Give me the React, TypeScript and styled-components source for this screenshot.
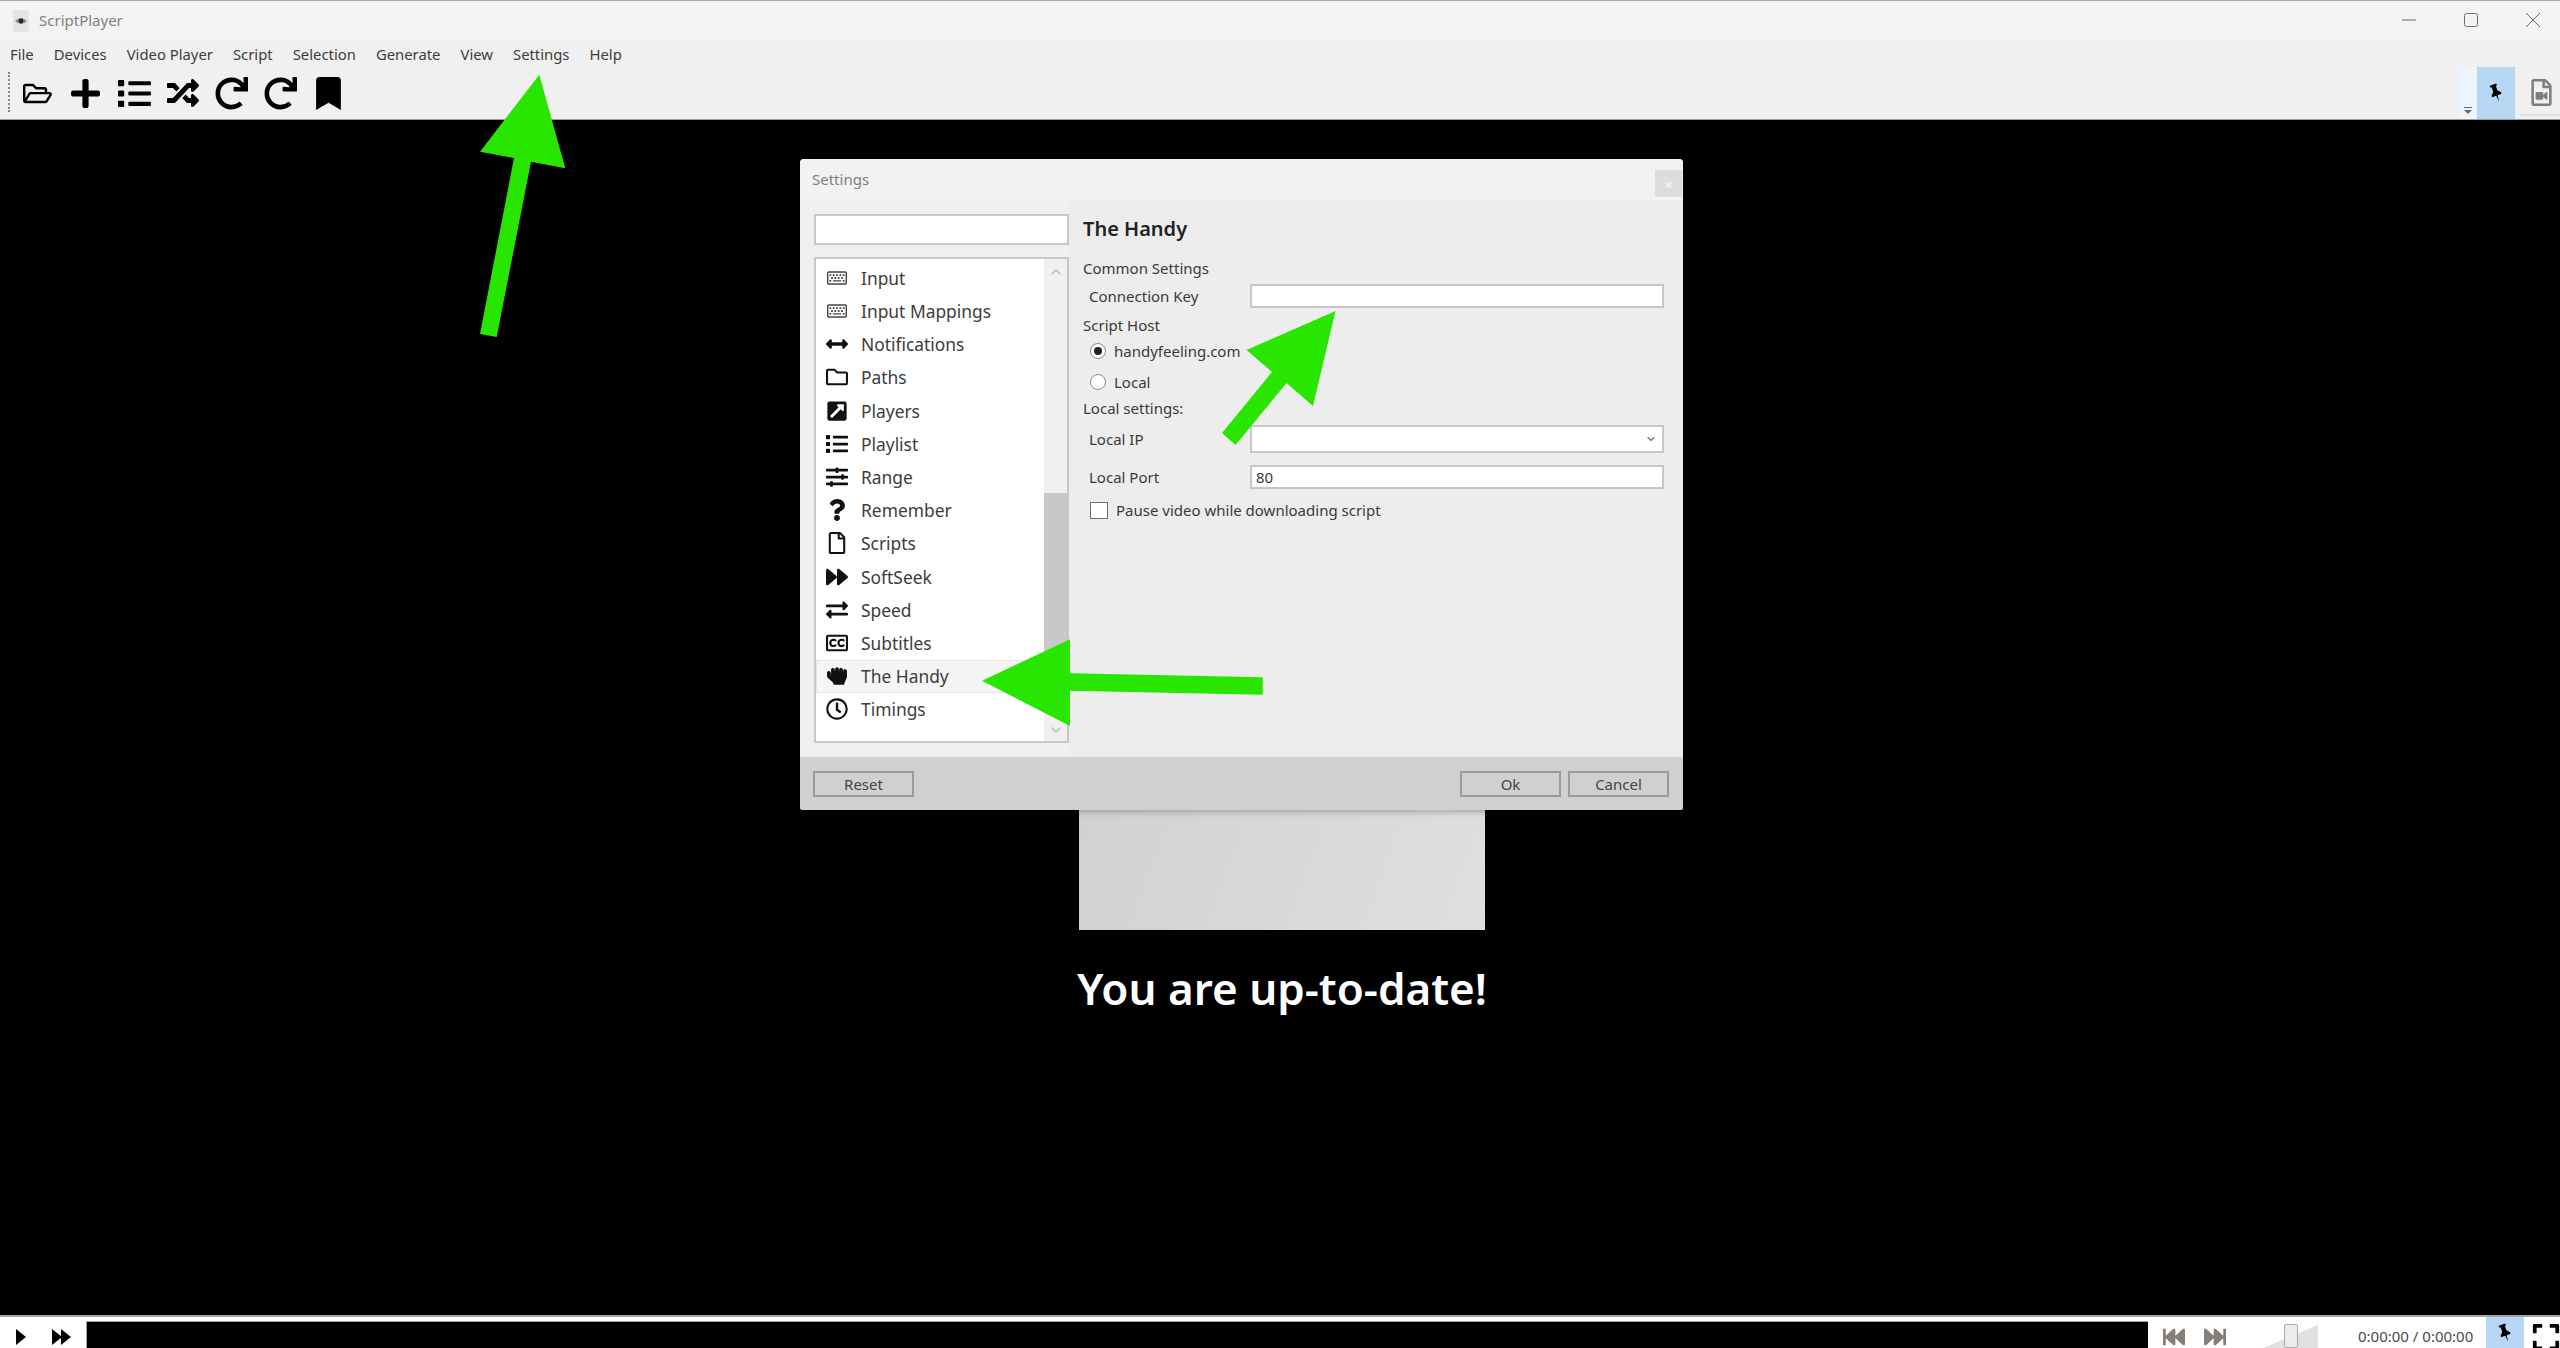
import React from 'react';
import styled, {createGlobalStyle} from 'styled-components';
import {ChevronDown, ChevronUp} from 'lucide-react';
import {
  FaArrowsAltH, FaBookmark, FaExchangeAlt, FaExpand, FaExternalLinkSquareAlt, FaFastBackward, FaFastForward,
  FaForward, FaHandRock, FaList, FaPlus, FaQuestion, FaRandom, FaRedo, FaRegClock, FaRegClosedCaptioning,
  FaRegFile, FaRegFileVideo, FaRegFolder, FaRegFolderOpen, FaRegKeyboard, FaSlidersH,
} from 'react-icons/fa';

const UI_FONT = `'Noto Sans', 'Open Sans', sans-serif`;

const GlobalStyle = createGlobalStyle`
  html, body {
    margin: 0;
    padding: 0;
    background: #000;
  }
  * {
    box-sizing: border-box;
  }
`;

const Page = styled.div`
  position: relative;
  width: 2560px;
  height: 1348px;
  display: flex;
  flex-direction: column;
  overflow: hidden;
  font-family: ${UI_FONT};
  color: #333;
`;

const TitleBar = styled.div`
  height: 41px;
  display: flex;
  align-items: center;
  padding-left: 13px;
  background: #f3f3f3;
  border-top: 1px solid #a8a8a8;
`;

const AppName = styled.span`
  margin-left: 10px;
  margin-bottom: 2px;
  font-size: 15px;
  color: #7f7f7f;
`;

const WindowControls = styled.div`
  margin-left: auto;
  display: flex;
  gap: 48px;
  padding: 0 20px 2px 0;
  color: #6c6c6c;
`;

const MenuBar = styled.div`
  height: 26px;
  display: flex;
  align-items: center;
  background: #f0f0f0;
`;

const MenuItem = styled.span`
  padding: 0 10px;
  font-size: 14.85px;
  color: #3d3d3d;
`;

const ToolBar = styled.div`
  height: 53px;
  display: flex;
  background: #f0f0f0;
  border-bottom: 1px solid #9c9c9c;
`;

const ToolHandle = styled.div`
  width: 2px;
  height: 40px;
  margin: 5px 3px 0 8px;
  border-left: 2px dotted #8a8a8a;
`;

const ToolButton = styled.div`
  width: 48.6px;
  height: 52px;
  display: flex;
  align-items: center;
  justify-content: center;
  color: #000;
`;

const ToolEnd = styled.div`
  margin-left: auto;
  display: flex;
`;

const OverflowGrip = styled.div`
  width: 18px;
  height: 52px;
  display: flex;
  align-items: flex-end;
  justify-content: center;
  padding-bottom: 5px;
  background: #ecf4fc;
`;

const PinToggle = styled.div<{$wide?: boolean}>`
  width: 38px;
  height: ${p => (p.$wide ? '31px' : '52px')};
  display: flex;
  align-items: center;
  justify-content: center;
  background: #b7d6f4;
  color: #000;
  svg {
    transform: rotate(-20deg);
  }
`;

const FileButton = styled.div`
  width: 45px;
  height: 52px;
  padding: 12px 0 0 13px;
  color: #7d7d7d;
`;

const FileButtonRule = styled.div`
  height: 2px;
  margin: 3px 0 0 -8px;
  background: #e2e2e2;
`;

const VideoArea = styled.main`
  flex: 1;
  display: flex;
  flex-direction: column;
  align-items: center;
  justify-content: center;
  padding-left: 4px;
  background: #000;
`;

const SplashImage = styled.div`
  width: 406px;
  height: 513px;
  background: linear-gradient(110deg, #cdcdcd, #dfdfdf);
`;

const SplashText = styled.div`
  margin-top: 28px;
  font-size: 44px;
  line-height: 60px;
  font-weight: 600;
  color: #fff;
`;

const BottomBar = styled.div`
  height: 33px;
  display: flex;
  background: #fff;
  border-top: 2px solid #a4a4a4;
`;

const PlayControls = styled.div`
  width: 86px;
  display: flex;
  align-items: center;
  padding: 8px 0 0 16px;
  gap: 26px;
  color: #000;
`;

const SeekBar = styled.div`
  flex: 1;
  margin-top: 4px;
  background: #000;
  border-top: 1px solid #a4a4a4;
  border-left: 1px solid #a4a4a4;
`;

const TransportGroup = styled.div`
  width: 412px;
  display: flex;
  align-items: center;
`;

const SkipGroup = styled.div`
  display: flex;
  align-items: center;
  gap: 19px;
  padding: 8px 0 0 15px;
  color: #857d78;
`;

const VolumeWrap = styled.div`
  position: relative;
  width: 55px;
  height: 31px;
  margin-left: 37px;
  padding-top: 8px;
`;

const VolumeThumb = styled.div`
  position: absolute;
  left: 21px;
  top: 7px;
  width: 14px;
  height: 24px;
  background: #ececec;
  border: 1px solid #ababab;
  border-radius: 2px;
`;

const TimeText = styled.span`
  width: 115px;
  margin-left: 40px;
  padding-top: 6px;
  font-size: 15px;
  white-space: nowrap;
  color: #4a4a4a;
`;

const BottomPin = styled.div`
  margin-left: 13px;
`;

const FullscreenSlot = styled.div`
  width: 30px;
  height: 31px;
  margin-left: 7px;
  padding-top: 5px;
  overflow: hidden;
  color: #000;
`;

const Dialog = styled.div`
  position: absolute;
  left: 800px;
  top: 159px;
  width: 883px;
  height: 651px;
  display: flex;
  flex-direction: column;
  background: #ededed;
  border-radius: 4px 4px 3px 3px;
  overflow: hidden;
  box-shadow: 0 2px 6px rgba(0, 0, 0, 0.25);
`;

const DialogTitleBar = styled.div`
  height: 41px;
  display: flex;
  justify-content: space-between;
  padding: 11px 1px 3px 12px;
  background: #f2f2f2;
`;

const DialogTitle = styled.span`
  font-size: 15px;
  line-height: 18px;
  color: #808080;
`;

const DialogClose = styled.div`
  width: 27px;
  height: 27px;
  display: flex;
  align-items: center;
  justify-content: center;
  background: #dddddd;
  color: #f4f4f4;
  font-size: 15px;
  font-weight: 700;
`;

const DialogBody = styled.div`
  flex: 1;
  display: flex;
  min-height: 0;
`;

const SidePane = styled.div`
  width: 269px;
  padding: 14px 0 0 14px;
  background: #efefef;
`;

const SearchBox = styled.input`
  display: block;
  width: 255px;
  height: 31px;
  background: #fff;
  border: 2px solid #c6c6cc;
  outline: none;
`;

const CategoryBox = styled.div`
  width: 255px;
  height: 486px;
  margin-top: 12px;
  display: flex;
  background: #fff;
  border: 2px solid #c6c6cc;
`;

const CategoryRows = styled.div`
  flex: 1;
  padding-top: 2.3px;
`;

const CategoryRow = styled.div<{$selected?: boolean}>`
  height: 33.2px;
  display: flex;
  align-items: center;
  padding-left: 10px;
  font-size: 17.4px;
  color: #3c3c3c;
  background: ${p => (p.$selected ? '#f5f5f5' : 'transparent')};
  box-shadow: ${p => (p.$selected ? 'inset 0 0 0 1px #e6e6e6' : 'none')};
`;

const CategoryIcon = styled.span`
  width: 22px;
  margin-right: 13px;
  display: flex;
  justify-content: center;
  color: #111;
`;

const ScrollTrack = styled.div`
  width: 23px;
  display: flex;
  flex-direction: column;
  align-items: center;
  background: #f0f0f0;
  color: #b9b9b9;
`;

const ScrollUp = styled.div`
  height: 26px;
  display: flex;
  align-items: center;
`;

const ScrollThumb = styled.div`
  width: 23px;
  height: 207px;
  margin-top: 208px;
  background: #c8c8c8;
`;

const ScrollDown = styled.div`
  height: 22px;
  margin-top: auto;
  display: flex;
  align-items: center;
`;

const SettingsPane = styled.div`
  flex: 1;
  padding: 14px 19px 0 14px;
`;

const PageHeading = styled.div`
  height: 30px;
  font-size: 20px;
  line-height: 30px;
  font-weight: 600;
  color: #222;
`;

const GroupLabel = styled.div<{$top: number}>`
  height: 22px;
  margin-top: ${p => p.$top}px;
  font-size: 15px;
  line-height: 21px;
  color: #3a3a3a;
`;

const FieldRow = styled.div<{$top: number}>`
  display: flex;
  align-items: center;
  margin-top: ${p => p.$top}px;
`;

const FieldLabel = styled.label`
  width: 167px;
  padding-left: 6px;
  font-size: 15px;
  color: #3a3a3a;
`;

const TextField = styled.input`
  width: 414px;
  height: 24px;
  padding: 0 4px;
  background: #fff;
  border: 2px solid #c6c6cc;
  outline: none;
  font-family: ${UI_FONT};
  font-size: 15px;
  color: #3a3a3a;
`;

const ComboField = styled.div`
  width: 414px;
  height: 28px;
  display: flex;
  align-items: center;
  justify-content: flex-end;
  padding-right: 5px;
  background: #fff;
  border: 2px solid #c6c6cc;
  color: #777;
`;

const ChoiceRow = styled.div<{$top: number}>`
  height: 24px;
  margin-top: ${p => p.$top}px;
  padding-left: 7px;
  display: flex;
  align-items: center;
  gap: 8px;
  font-size: 15px;
  color: #3a3a3a;
`;

const RadioDot = styled.span<{$checked?: boolean}>`
  width: 16px;
  height: 16px;
  display: flex;
  align-items: center;
  justify-content: center;
  background: #fff;
  border: 1.5px solid #8c8c8c;
  border-radius: 50%;
  &::after {
    content: '';
    width: 8px;
    height: 8px;
    border-radius: 50%;
    background: ${p => (p.$checked ? '#222' : 'transparent')};
  }
`;

const CheckBox = styled.span`
  width: 18px;
  height: 17px;
  background: #fff;
  border: 1.5px solid #6e6e6e;
`;

const DialogFooter = styled.div`
  height: 53px;
  display: flex;
  align-items: center;
  gap: 7px;
  padding: 0 14px 0 13px;
  background: #d0d0d0;
`;

const FooterButton = styled.div<{$push?: boolean}>`
  width: 101px;
  height: 26px;
  margin-left: ${p => (p.$push ? 'auto' : '0')};
  display: flex;
  align-items: center;
  justify-content: center;
  border: 2px solid #9b9b9b;
  font-size: 15px;
  color: #444;
`;

const ArrowLayer = styled.svg`
  position: absolute;
  left: 0;
  top: 0;
  pointer-events: none;
`;

const menuItems = ['File', 'Devices', 'Video Player', 'Script', 'Selection', 'Generate', 'View', 'Settings', 'Help'];

const categories = [
  {label: 'Input', icon: <FaRegKeyboard size={20} color="#444" />},
  {label: 'Input Mappings', icon: <FaRegKeyboard size={20} color="#444" />},
  {label: 'Notifications', icon: <FaArrowsAltH size={22} />},
  {label: 'Paths', icon: <FaRegFolder size={22} />},
  {label: 'Players', icon: <FaExternalLinkSquareAlt size={22} />},
  {label: 'Playlist', icon: <FaList size={22} />},
  {label: 'Range', icon: <FaSlidersH size={22} />},
  {label: 'Remember', icon: <FaQuestion size={22} />},
  {label: 'Scripts', icon: <FaRegFile size={22} />},
  {label: 'SoftSeek', icon: <FaForward size={22} />},
  {label: 'Speed', icon: <FaExchangeAlt size={22} />},
  {label: 'Subtitles', icon: <FaRegClosedCaptioning size={22} />},
  {label: 'The Handy', icon: <FaHandRock size={20} />, selected: true},
  {label: 'Timings', icon: <FaRegClock size={22} />},
];

const AppIcon = () => (
  <svg width="16" height="22" viewBox="0 0 16 22">
    <rect width="16" height="22" rx="2" fill="#e4e4e4" />
    <path d="M2 11 Q8 5 14 11 Q8 17 2 11Z" fill="#8a8a8a" />
    <circle cx="8" cy="11" r="2.4" fill="#222" />
  </svg>
);

const MinimizeGlyph = () => (
  <svg width="14" height="14" viewBox="0 0 14 14"><path d="M0 7h14" stroke="currentColor" strokeWidth="1" /></svg>
);

const MaximizeGlyph = () => (
  <svg width="14" height="14" viewBox="0 0 14 14">
    <rect x="0.5" y="0.5" width="13" height="13" rx="2" fill="none" stroke="currentColor" />
  </svg>
);

const CloseGlyph = () => (
  <svg width="14" height="14" viewBox="0 0 14 14"><path d="M0 0l14 14M14 0L0 14" stroke="currentColor" strokeWidth="1" /></svg>
);

const OverflowGlyph = () => (
  <svg width="8" height="7" viewBox="0 0 8 7">
    <path d="M0 0h8v1H0z M0 3h8L4 7z" fill="#6a6a6a" />
  </svg>
);

const PlayGlyph = () => (
  <svg width="10" height="16" viewBox="0 0 10 16"><path d="M0 0l10 8-10 8z" fill="currentColor" /></svg>
);

const NextGlyph = () => (
  <svg width="19" height="16" viewBox="0 0 19 16">
    <path d="M0 0l10 8-10 8z M9 0l10 8-10 8z" fill="currentColor" />
  </svg>
);

const VolumeRamp = () => (
  <svg width="55" height="23" viewBox="0 0 55 23"><path d="M0 23L55 0v23z" fill="#e0e0e0" /></svg>
);

const PinGlyph = () => (
  <svg width="12" height="18" viewBox="0 0 12 18">
    <path d="M2.5 0h7v2.2H8.2V7L11 10v1.6H6.8L6 18l-.8-6.4H1V10l2.8-3V2.2H2.5z" fill="currentColor" />
  </svg>
);

const App = () => (
  <Page>
    <GlobalStyle />
    <TitleBar>
      <AppIcon />
      <AppName>ScriptPlayer</AppName>
      <WindowControls>
        <MinimizeGlyph />
        <MaximizeGlyph />
        <CloseGlyph />
      </WindowControls>
    </TitleBar>
    <MenuBar>
      {menuItems.map(item => <MenuItem key={item}>{item}</MenuItem>)}
    </MenuBar>
    <ToolBar>
      <ToolHandle />
      <ToolButton><FaRegFolderOpen size={29} /></ToolButton>
      <ToolButton><FaPlus size={33} /></ToolButton>
      <ToolButton><FaList size={33} /></ToolButton>
      <ToolButton><FaRandom size={32} /></ToolButton>
      <ToolButton><FaRedo size={33} /></ToolButton>
      <ToolButton><FaRedo size={33} /></ToolButton>
      <ToolButton><FaBookmark size={33} /></ToolButton>
      <ToolEnd>
        <OverflowGrip><OverflowGlyph /></OverflowGrip>
        <PinToggle><PinGlyph /></PinToggle>
        <FileButton>
          <FaRegFileVideo size={27} />
          <FileButtonRule />
        </FileButton>
      </ToolEnd>
    </ToolBar>

    <VideoArea>
      <SplashImage />
      <SplashText>You are up-to-date!</SplashText>
    </VideoArea>

    <BottomBar>
      <PlayControls>
        <PlayGlyph />
        <NextGlyph />
      </PlayControls>
      <SeekBar />
      <TransportGroup>
        <SkipGroup>
          <FaFastBackward size={22} />
          <FaFastForward size={22} />
        </SkipGroup>
        <VolumeWrap>
          <VolumeRamp />
          <VolumeThumb />
        </VolumeWrap>
        <TimeText>0:00:00 / 0:00:00</TimeText>
        <BottomPin>
          <PinToggle $wide><PinGlyph /></PinToggle>
        </BottomPin>
        <FullscreenSlot><FaExpand size={30} /></FullscreenSlot>
      </TransportGroup>
    </BottomBar>

    <Dialog>
      <DialogTitleBar>
        <DialogTitle>Settings</DialogTitle>
        <DialogClose>×</DialogClose>
      </DialogTitleBar>
      <DialogBody>
        <SidePane>
          <SearchBox readOnly />
          <CategoryBox>
            <CategoryRows>
              {categories.map(cat => (
                <CategoryRow key={cat.label} $selected={cat.selected}>
                  <CategoryIcon>{cat.icon}</CategoryIcon>
                  {cat.label}
                </CategoryRow>
              ))}
            </CategoryRows>
            <ScrollTrack>
              <ScrollUp><ChevronUp size={16} /></ScrollUp>
              <ScrollThumb />
              <ScrollDown><ChevronDown size={16} /></ScrollDown>
            </ScrollTrack>
          </CategoryBox>
        </SidePane>
        <SettingsPane>
          <PageHeading>The Handy</PageHeading>
          <GroupLabel $top={14}>Common Settings</GroupLabel>
          <FieldRow $top={4}>
            <FieldLabel>Connection Key</FieldLabel>
            <TextField readOnly />
          </FieldRow>
          <GroupLabel $top={7}>Script Host</GroupLabel>
          <ChoiceRow $top={2}>
            <RadioDot $checked />
            handyfeeling.com
          </ChoiceRow>
          <ChoiceRow $top={7}>
            <RadioDot />
            Local
          </ChoiceRow>
          <GroupLabel $top={4}>Local settings:</GroupLabel>
          <FieldRow $top={5}>
            <FieldLabel>Local IP</FieldLabel>
            <ComboField><ChevronDown size={12} strokeWidth={2.5} /></ComboField>
          </FieldRow>
          <FieldRow $top={12}>
            <FieldLabel>Local Port</FieldLabel>
            <TextField readOnly value="80" />
          </FieldRow>
          <ChoiceRow $top={9}>
            <CheckBox />
            Pause video while downloading script
          </ChoiceRow>
        </SettingsPane>
      </DialogBody>
      <DialogFooter>
        <FooterButton>Reset</FooterButton>
        <FooterButton $push>Ok</FooterButton>
        <FooterButton>Cancel</FooterButton>
      </DialogFooter>
    </Dialog>

    <ArrowLayer width="2560" height="1348" viewBox="0 0 2560 1348">
      <g fill="#28e600">
        <polygon points="539.3,74.7 480,151.7 514,158 480,334 496.7,337 531,161.7 565.3,168.3" />
        <polygon points="1335.5,311 1246.5,350 1272,372 1222,433 1235.5,445 1286.5,383 1313,406" />
        <polygon points="982,680.7 1070,639.3 1070,673.3 1262.7,677.3 1262.7,694.7 1070,690.7 1070,726" />
      </g>
    </ArrowLayer>
  </Page>
);

export default App;
